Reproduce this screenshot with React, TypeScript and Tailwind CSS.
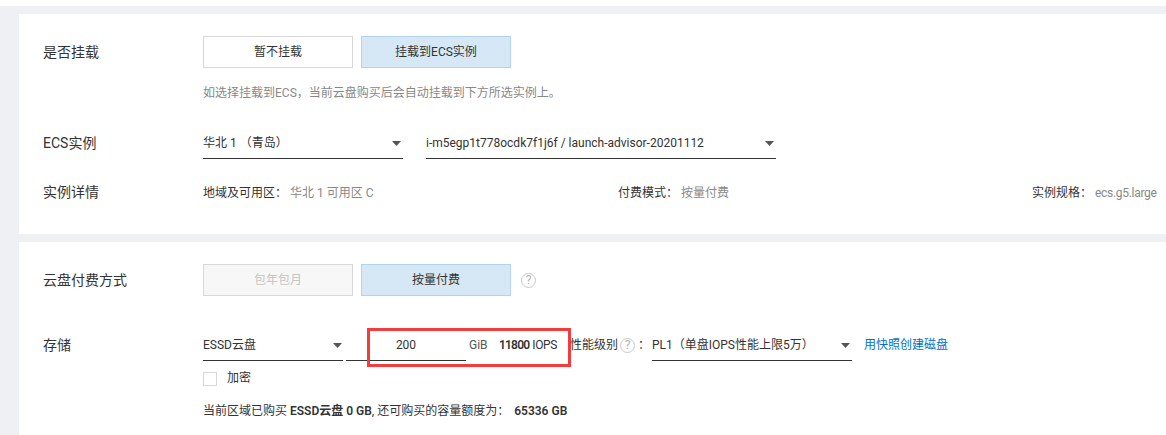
const font = "font-['Roboto','Noto_Sans_CJK_SC',sans-serif]"

function Arrow() {
    return (
        <svg width="9" height="5" viewBox="0 0 9 5" className="shrink-0">
            <path d="M0 0h9L4.5 5z" fill="#555" />
        </svg>
    )
}

function Help() {
    return (
        <span className="flex h-[15px] w-[15px] shrink-0 items-center justify-center rounded-full border-[1.5px] border-[#c8c8c8] text-[12px] leading-none text-[#b5b5b5]">
            ?
        </span>
    )
}

function Label({ children }: { children: React.ReactNode }) {
    return <div className="w-[160px] shrink-0 text-[14px] text-[#333]">{children}</div>
}

function Select({ text, width, pr = 'pr-[2px]' }: { text: string; width: string; pr?: string }) {
    return (
        <div className={`flex h-8 items-center justify-between border-b border-[#333] pt-[1px] text-[12px] text-[#333] ${width} ${pr}`}>
            <span className="whitespace-pre">{text}</span>
            <Arrow />
        </div>
    )
}

function Toggle({ text, mode }: { text: string; mode: 'off' | 'on' | 'disabled' }) {
    const look = {
        off: 'border-[#d7d8d9] bg-white text-[#333]',
        on: 'border-[#b3d4ee] bg-[#d6e8f5] text-[#333]',
        disabled: 'border-[#d7d8d9] bg-[#f7f7f7] text-[#c4c4c4]',
    }[mode]
    return (
        <div className={`flex h-8 w-[150px] items-center justify-center border text-[12px] ${look}`}>{text}</div>
    )
}

function Detail({ name, value, width, valueClass = '' }: { name: string; value: string; width: string; valueClass?: string }) {
    return (
        <div className={`shrink-0 whitespace-nowrap pt-[2px] text-[12px] ${width}`}>
            <span className="text-[#333]">{name}：</span>
            <span className={`ml-[3px] text-[#888] ${valueClass}`}>{value}</span>
        </div>
    )
}

export default function App() {
    return (
        <div className={`h-[435px] w-[1166px] overflow-hidden bg-white pt-[6px] ${font}`}>
            <div className="h-full bg-[#eff0f4] pl-[19px] pt-2">
                <div className="h-[220px] bg-white pl-6 pt-[22px]">
                    <div className="flex items-center">
                        <Label>是否挂载</Label>
                        <div className="flex gap-2">
                            <Toggle text="暂不挂载" mode="off" />
                            <Toggle text="挂载到ECS实例" mode="on" />
                        </div>
                    </div>
                    <div className="ml-[160px] mt-[14px] h-[20px] pt-[1px] text-[12px] leading-5 text-[#888]">
                        如选择挂载到ECS，当前云盘购买后会自动挂载到下方所选实例上。
                    </div>
                    <div className="mt-[25px] flex items-center">
                        <Label>ECS实例</Label>
                        <div className="flex gap-[23px]">
                            <Select text="华北 1 （青岛）" width="w-[200px]" />
                            <Select text="i-m5egp1t778ocdk7f1j6f / launch-advisor-20201112" width="w-[350px]" />
                        </div>
                    </div>
                    <div className="mt-[23px] flex h-5 items-center">
                        <Label>实例详情</Label>
                        <Detail name="地域及可用区" value="华北 1 可用区 C" width="w-[415px]" />
                        <Detail name="付费模式" value="按量付费" width="w-[414px]" />
                        <Detail name="实例规格" value="ecs.g5.large" width="w-[130px]" valueClass="tracking-[-0.3px]" />
                    </div>
                </div>
                <div className="mt-2 h-[200px] bg-white pl-6 pt-[22px]">
                    <div className="flex items-center">
                        <Label>云盘付费方式</Label>
                        <div className="flex items-center gap-2">
                            <Toggle text="包年包月" mode="disabled" />
                            <Toggle text="按量付费" mode="on" />
                            <div className="ml-[2px]">
                                <Help />
                            </div>
                        </div>
                    </div>
                    <div className="relative mt-[33px] flex items-center">
                        <Label>存储</Label>
                        <Select text="ESSD云盘" width="w-[140px]" pr="pr-[1px]" />
                        <div className="ml-[3px] flex h-8 w-[120px] items-center justify-center border-b border-[#333] pt-[1px] text-[12px] text-[#333]">
                            200
                        </div>
                        <span className="ml-[3px] w-[30px] text-[12px] text-[#555]">GiB</span>
                        <span className="flex w-[71px] gap-[3px] whitespace-nowrap text-[12px] text-[#333]">
                            <b className="font-semibold tracking-[-0.8px]">11800</b>
                            <span className="tracking-[-0.4px]">IOPS</span>
                        </span>
                        <span className="w-[48px] whitespace-nowrap text-[12px] text-[#333]">性能级别</span>
                        <span className="ml-[2px]">
                            <Help />
                        </span>
                        <span className="ml-[3px] w-[14px] text-[12px] text-[#333]">：</span>
                        <Select text="PL1（单盘IOPS性能上限5万）" width="w-[200px]" />
                        <span className="ml-3 whitespace-nowrap text-[12px] text-[#0070cc]">用快照创建磁盘</span>
                        <div className="absolute left-[324px] top-[-1px] h-[39px] w-[204px] border-[3px] border-[#f53c3c]" />
                    </div>
                    <div className="ml-[160px] mt-[11px] flex h-[14px] items-center">
                        <span className="h-[14px] w-[14px] border border-[#d7d8d9] bg-white" />
                        <span className="ml-[10px] pb-[2px] text-[12px] text-[#333]">加密</span>
                    </div>
                    <div className="ml-[160px] mt-[15px] h-5 whitespace-nowrap text-[12px] leading-5 text-[#333]">
                        当前区域已购买 <b className="font-semibold">ESSD云盘 0 GB</b>, 还可购买的容量额度为：
                        <b className="ml-[5px] font-semibold">65336 GB</b>
                    </div>
                </div>
            </div>
        </div>
    )
}
